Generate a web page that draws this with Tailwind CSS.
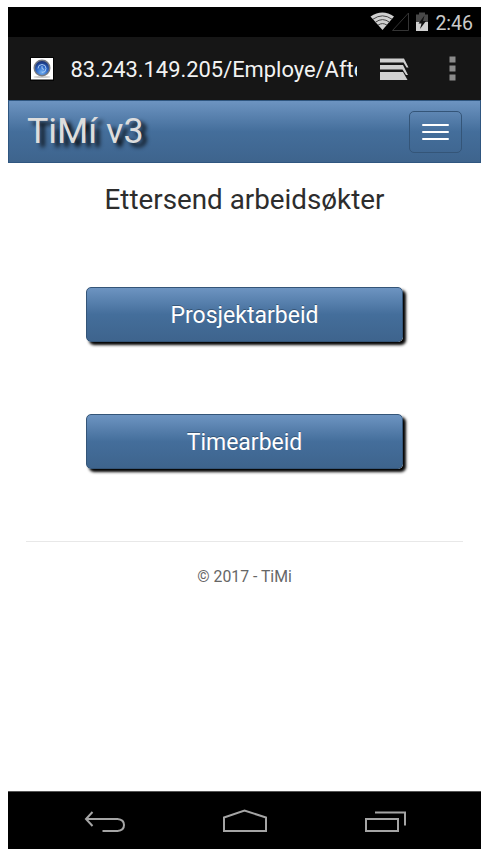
<!DOCTYPE html>
<html lang="no">
<head>
<meta charset="utf-8">
<title>TiMi</title>
<script src="https://cdn.jsdelivr.net/npm/@tailwindcss/browser@4"></script>
</head>
<body class="bg-white font-[Roboto,sans-serif] overflow-hidden">
<div class="mt-[7px] ml-2 w-[473px] h-[842px] flex flex-col">
  <!-- Status bar -->
  <div class="h-[30px] bg-black flex items-center justify-end pr-[8px] shrink-0">
    <svg class="w-[64px] h-[30px] mr-[4px]" viewBox="0 0 64 30">
      <path d="M3.500 9.500Q15.500 1.500 27 9.500L15.500 23Z" fill="#d0d0d0"/>
      <g fill="none" stroke="#444" stroke-width="1"><path d="M6 12.200Q15.500 5.500 25 12.200"/><path d="M8.500 15.200Q15.500 10 22.500 15.200"/><path d="M11 18.200Q15.500 15 20 18.200"/></g>
      <path d="M41.500 6V23.500H25.500Z" fill="none" stroke="#343434" stroke-width="1"/>
      <path d="M49 7.500h3V5.500h6v2h3V15H49Z" fill="#484848"/>
      <path d="M49 15H61v9H49Z" fill="#d0d0d0"/>
      <path d="M57.500 8.500L51.500 16.500h3l-1.500 5.500 6-8h-3Z" fill="#111"/>
    </svg>
    <span class="text-[19.5px] leading-none text-[#cacaca] pt-[3px]">2:46</span>
  </div>
  <!-- Address bar -->
  <div class="h-[63px] bg-[#161616] flex items-center shrink-0 pl-[22px]">
    <svg class="size-6 shrink-0" viewBox="0 0 24 24">
      <defs><radialGradient id="g" cx=".5" cy=".8" r=".8"><stop offset="0" stop-color="#76b5f5"/><stop offset=".5" stop-color="#2c66c5"/><stop offset="1" stop-color="#172c70"/></radialGradient></defs>
      <path d="M0 0H24V24H0Z" fill="#050505"/><path d="M1 1H23V22.500H1Z" fill="#fff"/>
      <ellipse cx="12" cy="20" rx="8.500" ry="1" fill="#ccc"/>
      <circle cx="12" cy="11" r="8.500" fill="#777b83"/><circle cx="12" cy="11" r="7" fill="url(#g)"/>
      <path d="M8 11.500a4 4 0 1 1 4 4M12 9v2.500l2 1" fill="none" stroke="#a9c9f2" stroke-width="1"/>
    </svg>
    <div class="ml-[16.500px] w-[286px] overflow-hidden whitespace-nowrap text-[21.9px] leading-[30px] text-[#f2f2f2] pt-[2px] shrink-0">83.243.149.205/Employe/Afte</div>
    <svg class="w-[30px] h-6 ml-[23px] shrink-0" viewBox="0 0 30 24" fill="#d0d0d0">
      <path d="M0 1.500H24L28.500 10.500H26.500L23.500 5.500H0Z"/><path d="M0 8H23L28 18H26L22.500 12.500H0Z"/><path d="M0 15H23L27.500 23H0Z"/>
    </svg>
    <svg class="w-[7px] h-[25px] ml-[39px] shrink-0" viewBox="0 0 7 25" fill="#8c8c8c"><path d="M.5 .5h6v6h-6ZM.5 9.500h6v6h-6ZM.5 18.500h6v6h-6Z"/></svg>
  </div>
  <!-- Site header -->
  <div class="h-[63px] shrink-0 border border-[#2f5680] bg-[linear-gradient(#6d94c1_0%,#446e9b_50%,#3e648d_100%)] flex items-center justify-between pl-[18px] pr-[18px]">
    <span class="text-[35.8px] leading-none text-[#dddddd] [text-shadow:5px_4px_4px_rgba(0,0,0,.9)]">TiMí v3</span>
    <div class="w-[53px] h-[42px] border border-[#345578] rounded-[5px] flex flex-col items-center justify-center gap-[5px]">
      <i class="w-[27px] h-[2px] bg-white rounded-[1px]"></i><i class="w-[27px] h-[2px] bg-white rounded-[1px]"></i><i class="w-[27px] h-[2px] bg-white rounded-[1px]"></i>
    </div>
  </div>
  <!-- Page content -->
  <div class="grow flex flex-col items-center bg-white">
    <h1 class="mt-[20px] text-[27.8px] leading-[34px] text-[#2d2d2d] whitespace-nowrap">Ettersend arbeidsøkter</h1>
    <button class="mt-[70px] w-[317px] h-[55px] pt-[3px] rounded-[5px] border border-[#345578] bg-[linear-gradient(#6d94c1_0%,#446e9b_50%,#3e648d_100%)] text-white text-[23px] [text-shadow:0_-1px_0_rgba(0,0,0,.3)] shadow-[3px_3px_3px_#000]">Prosjektarbeid</button>
    <button class="mt-[72px] w-[317px] h-[55px] pt-[3px] rounded-[5px] border border-[#345578] bg-[linear-gradient(#6d94c1_0%,#446e9b_50%,#3e648d_100%)] text-white text-[23px] [text-shadow:0_-1px_0_rgba(0,0,0,.3)] shadow-[3px_3px_3px_#000]">Timearbeid</button>
    <div class="mt-[72px] w-[437px] border-t border-[#e8e8e8]"></div>
    <p class="mt-[24px] text-[15.8px] leading-[22px] text-[#666]">© 2017 - TiMi</p>
  </div>
  <!-- System navigation -->
  <div class="h-[58px] shrink-0 bg-black border-t border-[#555] flex items-center">
    <svg class="w-full h-[57px]" viewBox="0 0 473 57" fill="none" stroke="#a5a5a5" stroke-width="2">
      <path d="M84.500 20L78 27L84.500 34M78 27H109.500Q116 27.500 116 33T109.500 39H94.500"/>
      <path d="M216 39V25.500L236.500 18.500L258 25.500V39Z"/>
      <path d="M358 27H390V39H358ZM367 20.500H397V33.500"/>
    </svg>
  </div>
</div>
</body>
</html>
